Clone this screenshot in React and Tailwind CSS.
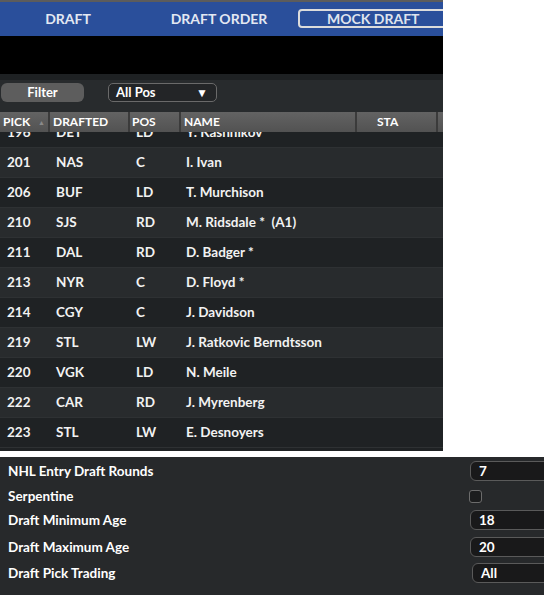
const picks = [
  { pick: 196, team: 'DET', pos: 'LD', name: 'Y. Kashnikov' },
  { pick: 201, team: 'NAS', pos: 'C', name: 'I. Ivan' },
  { pick: 206, team: 'BUF', pos: 'LD', name: 'T. Murchison' },
  { pick: 210, team: 'SJS', pos: 'RD', name: 'M. Ridsdale *  (A1)' },
  { pick: 211, team: 'DAL', pos: 'RD', name: 'D. Badger *' },
  { pick: 213, team: 'NYR', pos: 'C', name: 'D. Floyd *' },
  { pick: 214, team: 'CGY', pos: 'C', name: 'J. Davidson' },
  { pick: 219, team: 'STL', pos: 'LW', name: 'J. Ratkovic Berndtsson' },
  { pick: 220, team: 'VGK', pos: 'LD', name: 'N. Meile' },
  { pick: 222, team: 'CAR', pos: 'RD', name: 'J. Myrenberg' },
  { pick: 223, team: 'STL', pos: 'LW', name: 'E. Desnoyers' },
]

function HeaderCell({ className, children }) {
  return (
    <div
      className={`flex h-full items-center bg-gradient-to-b from-[#636363] to-[#525252] ${className}`}
    >
      {children}
    </div>
  )
}

function SettingBox({ value, className = '' }) {
  return (
    <div
      className={`flex h-[20px] w-[90px] items-center rounded-[6px] border border-[#5a5a5a] bg-[#19191a] pl-[8px] text-[13.5px] text-white ${className}`}
    >
      {value}
    </div>
  )
}

export default function App() {
  return (
    <div
      className="flex h-[595px] w-[544px] flex-col overflow-hidden bg-white font-bold"
      style={{ fontFamily: 'Lato, "Noto Sans", sans-serif' }}
    >
      <div className="flex h-[451px] w-[443px] flex-col overflow-hidden bg-[#1f2224]">
        <div className="h-[2px] bg-[#5c5c5c]" />
        <nav className="flex h-[34px] items-center bg-[#2a4f9b] pb-[1px] text-[14px] text-[#e3e8f2]">
          <div className="w-[136px] shrink-0 text-center">DRAFT</div>
          <div className="w-[162px] shrink-0 pl-[4px] text-center">DRAFT ORDER</div>
          <div className="flex h-[19px] w-[152px] shrink-0 items-center rounded-[4px] border-2 border-[#dcdcdc] pl-[27px] text-[#dfe4ee]">
            MOCK DRAFT
          </div>
        </nav>
        <div className="h-[38px] bg-black" />
        <div className="h-[6px] bg-[#1e2123]" />
        <div className="flex h-[32px] items-start bg-[#282b2d] pt-[3px]">
          <button className="ml-[1px] h-[19px] w-[83px] rounded-[6px] bg-[#5d5d5d] text-[13px] text-white">
            Filter
          </button>
          <div className="ml-[24px] flex h-[19px] w-[109px] items-center justify-between rounded-[5px] border border-[#6a6a6a] bg-[#232527] pl-[7px] pr-[8px] text-[13px] text-white">
            <span>All Pos</span>
            <span className="text-[12px]">▼</span>
          </div>
        </div>

        <div className="flex h-[20px] shrink-0 gap-[2px] bg-[#3b3b3b] text-[12px] text-white">
          <HeaderCell className="w-[48px] justify-between pl-[3px] pr-[3px]">
            PICK
            <span className="text-[7px] text-[#8a8a8a]">▲</span>
          </HeaderCell>
          <HeaderCell className="w-[78px] pl-[3px]">DRAFTED</HeaderCell>
          <HeaderCell className="w-[49px] pl-[2px]">POS</HeaderCell>
          <HeaderCell className="w-[174px] pl-[3px]">NAME</HeaderCell>
          <HeaderCell className="w-[79px] pl-[20px]">STA</HeaderCell>
          <HeaderCell className="flex-1" />
        </div>
        <div className="flex-1 overflow-hidden">
          <div className="mt-[-14px] flex flex-col text-[13.5px] text-[#f2f2f2]">
            {picks.map((p, i) => (
              <div
                key={p.pick}
                className={`flex h-[30px] shrink-0 items-center border-b border-[#2e3133] ${
                  i % 2 === 0 ? 'bg-[#1f2224]' : 'bg-[#282b2d]'
                }`}
              >
                <span className="w-[56px] pl-[7px]">{p.pick}</span>
                <span className="w-[80px]">{p.team}</span>
                <span className="w-[50px]">{p.pos}</span>
                <span className="whitespace-pre">{p.name}</span>
              </div>
            ))}
          </div>
        </div>
      </div>

      <div className="mt-[6px] flex flex-1 flex-col bg-[#27292b] pt-[4px] text-[13.5px] text-white">
        <div className="flex h-[20px] items-center justify-between pl-[8px]">
          <span>NHL Entry Draft Rounds</span>
          <SettingBox value="7" className="mr-[-16px]" />
        </div>
        <div className="mt-[5px] flex h-[20px] items-center justify-between pl-[8px]">
          <span>Serpentine</span>
          <div className="mr-[62px] h-[13px] w-[13px] rounded-[3px] border border-[#6c6c6c] bg-[#1c1d1e]" />
        </div>
        <div className="mt-[4px] flex h-[20px] items-center justify-between pl-[8px]">
          <span>Draft Minimum Age</span>
          <SettingBox value="18" className="mr-[-16px]" />
        </div>
        <div className="mt-[7px] flex h-[20px] items-center justify-between pl-[8px]">
          <span>Draft Maximum Age</span>
          <SettingBox value="20" className="mr-[-16px]" />
        </div>
        <div className="mt-[6px] flex h-[20px] items-center justify-between pl-[8px]">
          <span>Draft Pick Trading</span>
          <SettingBox value="All" className="mr-[-18px]" />
        </div>
      </div>
    </div>
  )
}
